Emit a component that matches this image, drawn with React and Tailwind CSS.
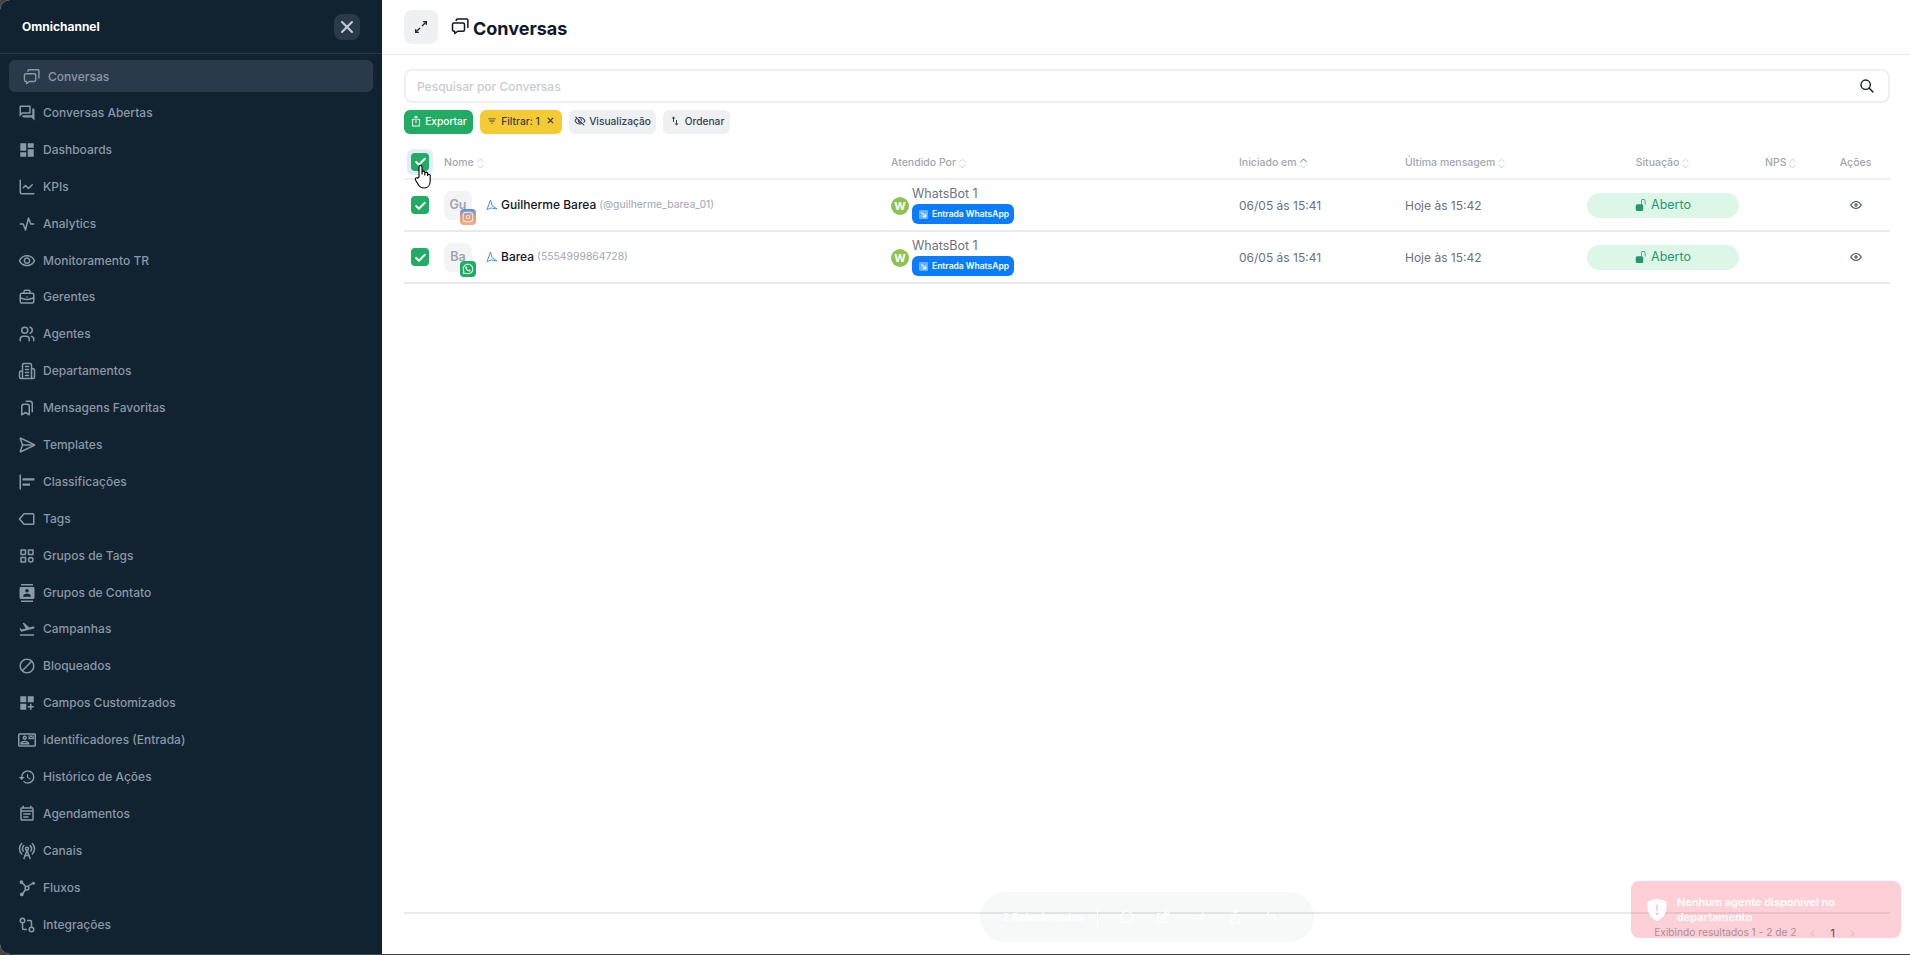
import {
  TbBriefcase, TbBookmarks, TbCategory, TbArrowsDiagonal, TbSearch, TbEye, TbX, TbBrandInstagram, TbUsers, TbMessageCircle, TbEdit, TbArrowsExchange, TbCornerUpLeft, TbChevronLeft, TbChevronRight, TbActivity,
} from "react-icons/tb";
import {
  MdDashboard, MdOutlineQuestionAnswer, MdOutlineVisibility, MdOutlineVisibilityOff, MdOutlineAlignHorizontalLeft, MdFlightTakeoff, MdOutlineBlock, MdDashboardCustomize, MdOutlineContactMail, MdHistory, MdContacts, MdOutlineEventNote, MdOutlineIosShare, MdFilterList, MdSwapVert,
} from "react-icons/md";
import { LuBuilding2, LuSendHorizontal, LuRadioTower, LuGitCompare, LuChartLine } from "react-icons/lu";
import { BsShieldFillExclamation, BsFillUnlockFill } from "react-icons/bs";
import { FaWhatsapp } from "react-icons/fa";

const TagIcon = ({ size }) => (
  <svg width={size} height={size} viewBox="0 0 24 24" fill="none" stroke="currentColor" strokeWidth="2">
    <path d="M8 5h12a1 1 0 0 1 1 1v12a1 1 0 0 1-1 1H8l-6-7z" strokeLinejoin="round" />
  </svg>
);

const ChatsIcon = ({ size, className }) => (
  <svg className={className} width={size} height={size} viewBox="0 0 24 24" fill="none" stroke="currentColor" strokeWidth="2" strokeLinejoin="round" strokeLinecap="round">
    <path d="M2 10a2 2 0 0 1 2-2h12a2 2 0 0 1 2 2v7a2 2 0 0 1-2 2H9l-4 3v-3H4a2 2 0 0 1-2-2z" />
    <path d="M7 4.500V4a1.500 1.500 0 0 1 1.500-1.500H21a1.500 1.500 0 0 1 1.500 1.500v10" />
  </svg>
);

const FlowIcon = ({ size }) => (
  <svg width={size} height={size} viewBox="0 0 24 24" fill="none" stroke="currentColor" strokeWidth="2">
    <path d="M5 4l5 6M19 6l-6 4M6 20l4-6" />
    <circle cx="12" cy="12" r="2.500" />
    <circle cx="4.500" cy="4" r="2.500" fill="currentColor" stroke="none" />
    <circle cx="20.500" cy="5.500" r="2" fill="currentColor" stroke="none" />
    <circle cx="5" cy="20.500" r="2.500" fill="currentColor" stroke="none" />
  </svg>
);

const menu = [
  { label: "Conversas Abertas", icon: MdOutlineQuestionAnswer },
  { label: "Dashboards", icon: MdDashboard },
  { label: "KPIs", icon: LuChartLine },
  { label: "Analytics", icon: TbActivity },
  { label: "Monitoramento TR", icon: MdOutlineVisibility },
  { label: "Gerentes", icon: TbBriefcase },
  { label: "Agentes", icon: TbUsers },
  { label: "Departamentos", icon: LuBuilding2 },
  { label: "Mensagens Favoritas", icon: TbBookmarks },
  { label: "Templates", icon: LuSendHorizontal },
  { label: "Classificações", icon: MdOutlineAlignHorizontalLeft },
  { label: "Tags", icon: TagIcon },
  { label: "Grupos de Tags", icon: TbCategory },
  { label: "Grupos de Contato", icon: MdContacts },
  { label: "Campanhas", icon: MdFlightTakeoff },
  { label: "Bloqueados", icon: MdOutlineBlock },
  { label: "Campos Customizados", icon: MdDashboardCustomize },
  { label: "Identificadores (Entrada)", icon: MdOutlineContactMail },
  { label: "Histórico de Ações", icon: MdHistory },
  { label: "Agendamentos", icon: MdOutlineEventNote },
  { label: "Canais", icon: LuRadioTower },
  { label: "Fluxos", icon: FlowIcon },
  { label: "Integrações", icon: LuGitCompare },
];

const rows = [
  { initials: "Gu", name: "Guilherme Barea", handle: "(@guilherme_barea_01)", channel: "instagram" },
  { initials: "Ba", name: "Barea", handle: "(5554999864728)", channel: "whatsapp" },
];

const gridCols = "grid grid-cols-[40px_447px_348px_166px_182px_152px_86px_1fr] items-center";

function Sidebar() {
  return (
    <aside className="w-[382px] shrink-0 bg-[#112231] rounded-l-[10px] overflow-hidden flex flex-col">
      <div className="h-[54px] shrink-0 border-b border-[#26384a] flex items-center justify-between pl-[22px] pr-[22px]">
        <span className="text-[12px] font-bold text-white">Omnichannel</span>
        <button className="w-[26px] h-[26px] rounded-lg bg-[#2b3a4a] flex items-center justify-center text-[#c3cad1]">
          <TbX size={20} strokeWidth={2.5} />
        </button>
      </div>
      <div className="px-[9px] pt-[6px]">
        <div className="h-[32px] rounded-md bg-[#2a3a4a] flex items-center pl-[14px] gap-[8px] text-[#8b98a6]">
          <ChatsIcon size={17} />
          <span className="pt-[1px] text-[12px] font-medium">Conversas</span>
        </div>
      </div>
      <nav className="pt-[2.5px]">
        {menu.map((item) => (
          <div key={item.label} className="h-[36.9px] flex items-center pl-[18px] gap-[7px] text-[#8b98a6]">
            <span className="w-[18px] flex justify-center"><item.icon size={18} /></span>
            <span className="text-[12px] font-medium">{item.label}</span>
          </div>
        ))}
      </nav>
    </aside>
  );
}

function SortHead({ label, active }) {
  return (
    <span className="pt-[3px] flex items-center gap-[2px] text-[10.5px] font-medium text-[#a3a7b0]">
      {label}
      <svg width="9" height="11" viewBox="0 0 9 11" fill="none" strokeWidth="1" strokeLinecap="round" strokeLinejoin="round">
        <path d="M1.500 4L4.500 1l3 3" stroke={active ? "#6b7280" : "#cfd2d8"} />
        <path d="M1.500 7l3 3 3-3" stroke="#cfd2d8" />
      </svg>
    </span>
  );
}

function Checkbox() {
  return (
    <span className="w-[18px] h-[18px] rounded-[4px] bg-[#22ab63] flex items-center justify-center">
      <svg width="13" height="13" viewBox="0 0 24 24" fill="none" stroke="white" strokeWidth="3.5" strokeLinecap="round" strokeLinejoin="round">
        <path d="M4 13l5 5L20 7" />
      </svg>
    </span>
  );
}

function Row({ row }) {
  return (
    <div className={`${gridCols} h-[52px] border-b-2 border-[#e8e9ec]`}>
      <div className="pl-[7px]"><Checkbox /></div>
      <div className="flex items-center">
        <div className="relative w-[28px] h-[29px] rounded-lg bg-[#f3f4f6] flex items-center justify-center text-[12.5px] font-semibold text-[#9ca3af]">
          {row.initials}
          {row.channel === "instagram" ? (
            <span className="absolute left-[16px] top-[18px] w-4 h-4 rounded-[4px] bg-gradient-to-b from-[#4d8fe0] via-[#e59a72] to-[#f0b090] flex items-center justify-center text-white/70">
              <TbBrandInstagram size={14} />
            </span>
          ) : (
            <span className="absolute left-[16px] top-[18px] w-4 h-4 rounded-[4px] bg-[#22ab63] flex items-center justify-center text-white">
              <FaWhatsapp size={12} />
            </span>
          )}
        </div>
        <svg className="ml-[14px] -mt-[1px]" width="12" height="12" viewBox="0 0 24 24" fill="none" stroke="#3f93f5" strokeWidth="2" strokeLinejoin="round">
          <path d="M9 2L2 21l9-3 11 2-10-7z" />
        </svg>
        <span className="ml-[3px] text-[12px] font-medium text-[#111827]">{row.name}</span>
        <span className="ml-[3px] text-[10.4px] text-[#a3a7b0]">{row.handle}</span>
      </div>
      <div className="flex items-center gap-[3px]">
        <span className="w-[18px] h-[18px] mt-[2px] rounded-full bg-[#8fc24f] flex items-center justify-center text-[11px] font-bold text-white">W</span>
        <div className="flex flex-col items-start">
          <span className="text-[12.5px] leading-[16px] text-[#6b7280]">WhatsBot 1</span>
          <span className="mt-[2px] h-[20px] w-[102px] rounded-md bg-[#0a7cff] flex items-center pl-[7px] gap-[4px] text-[8.5px] font-semibold text-white whitespace-nowrap">
            <span className="w-[9px] h-[9px] rounded-[1px] bg-white/40 flex items-center justify-center">
              <svg width="7" height="7" viewBox="0 0 10 10" stroke="white" strokeWidth="1.6" fill="none"><path d="M2 2l6 6M8 4v4H4" /></svg>
            </span>
            Entrada WhatsApp
          </span>
        </div>
      </div>
      <span className="pt-[1px] text-[12px] text-[#6b7280]">06/05 ás 15:41</span>
      <span className="pt-[1px] text-[12px] text-[#6b7280]">Hoje às 15:42</span>
      <span className="h-[25px] rounded-full bg-[#dcf6e7] flex items-center justify-center gap-[4px] text-[12.5px] text-[#27966f]">
        <BsFillUnlockFill size={12} className="-mt-[1px]" />
        Aberto
      </span>
      <span />
      <span className="flex justify-center pr-[4px] text-[#4b5563]"><TbEye size={14} /></span>
    </div>
  );
}

export default function App() {
  return (
    <div className="relative w-[1910px] h-[955px] bg-[#444] overflow-hidden font-[Inter,sans-serif]">
      <div className="h-[954px] flex bg-white rounded-l-[10px]">
        <Sidebar />
        <main className="flex-1 flex flex-col min-w-0">
          <header className="h-[55px] shrink-0 border-b border-[#e8e9ec] flex items-center pl-[22px]">
            <button className="w-[34px] h-[34px] rounded-lg bg-[#eff0f2] flex items-center justify-center text-[#1f2937]">
              <TbArrowsDiagonal size={16} />
            </button>
            <ChatsIcon size={18} className="ml-[13px] -mt-[2px] text-[#111827]" />
            <h1 className="ml-[4px] pt-[2px] text-[18px] font-bold text-[#0b1a2b]">Conversas</h1>
          </header>
          <div className="flex-1 flex flex-col pl-[22px] pr-[20px] pt-[14px]">
            <div className="h-[34px] rounded-lg border-2 border-[#eef0f2] flex items-center justify-between pl-[11px] pr-[13px]">
              <span className="pt-[1px] text-[12px] font-medium text-[#c8ccd2]">Pesquisar por Conversas</span>
              <TbSearch size={16} className="text-[#111827]" />
            </div>
            <div className="mt-[7px] flex gap-[7px] text-[10.2px] font-medium">
              <button className="h-[24px] w-[69px] rounded-md bg-[#22ab63] text-white flex items-center justify-center gap-[3px]">
                <MdOutlineIosShare size={12} className="-mt-[2px]" /> Exportar
              </button>
              <button className="h-[24px] w-[82px] rounded-md bg-[#f4cb35] text-[#374151] flex items-center justify-center gap-[4px]">
                <MdFilterList size={10} className="-mt-[2px]" /> Filtrar: 1 <TbX size={9} className="ml-[2px] -mt-[3px]" strokeWidth={3} />
              </button>
              <button className="h-[24px] w-[87px] rounded-md bg-[#eff0f2] text-[#374151] flex items-center justify-center gap-[3px]">
                <MdOutlineVisibilityOff size={12} className="-mt-[2px]" /> Visualização
              </button>
              <button className="h-[24px] w-[67px] rounded-md bg-[#eff0f2] text-[#374151] flex items-center justify-center gap-[4px]">
                <MdSwapVert size={12} className="-mt-[2px]" /> Ordenar
              </button>
            </div>
            <div className={`${gridCols} mt-[11px] h-[35px] border-b-2 border-[#eef0f2]`}>
              <div className="pl-[3px]">
                <span className="w-[26px] h-[26px] rounded-md bg-[#dfeefb] flex items-center justify-center"><Checkbox /></span>
              </div>
              <SortHead label="Nome" />
              <SortHead label="Atendido Por" />
              <SortHead label="Iniciado em" active />
              <SortHead label="Última mensagem" />
              <span className="flex justify-center"><SortHead label="Situação" /></span>
              <span className="pl-[26px]"><SortHead label="NPS" /></span>
              <span className="pt-[3px] text-center pr-[4px] text-[10.5px] font-medium text-[#a3a7b0]">Ações</span>
            </div>
            {rows.map((row) => <Row key={row.name} row={row} />)}
            <div className="mt-auto mb-[2px] h-[40px] border-t-2 border-[#e8e9ec] flex items-center justify-end pr-[32px] text-[10.2px] text-[#9ca3af]">
              <span>Exibindo resultados 1 - 2 de 2</span>
              <TbChevronLeft size={11} className="ml-[10px] text-[#d1d5db]" />
              <span className="ml-[13px] text-[11px] text-[#374151]">1</span>
              <TbChevronRight size={11} className="ml-[12px] text-[#d1d5db]" />
            </div>
          </div>
        </main>
      </div>

      {/* barra de selecao ainda aparecendo */}
      <div className="absolute left-[980px] top-[892px] w-[334px] h-[50px] rounded-full bg-[#6b8e86]/[0.05] flex items-center pl-[22px] text-white/80">
        <span className="w-[81px] text-[11px] font-bold whitespace-nowrap">2 Selecionados</span>
        <span className="w-px h-[20px] bg-white ml-[14px]" />
        <div className="ml-[21px] flex gap-[20px]">
          <TbMessageCircle size={16} />
          <TbEdit size={16} />
          <TbArrowsExchange size={16} />
          <MdOutlineIosShare size={16} />
          <TbCornerUpLeft size={16} />
        </div>
      </div>

      {/* toast */}
      <div className="absolute left-[1631px] top-[881px] w-[270px] h-[57px] rounded-lg bg-[#f5425a]/25 flex items-start pl-[15px] pt-[14px] text-white">
        <BsShieldFillExclamation size={22} className="mt-[4px]" />
        <p className="ml-[9px] w-[210px] text-[11px] leading-[15px] font-semibold">Nenhum agente disponível no departamento</p>
      </div>

      {/* cursor */}
      <svg className="absolute left-[414px] top-[164px]" width="20" height="25" viewBox="0 0 20 25" fill="white" stroke="black" strokeWidth="1.1" strokeLinejoin="round">
        <path d="M5 13V3a1.500 1.500 0 0 1 3 0v7l0-1.500a1.400 1.400 0 0 1 2.800 0V11V9.500a1.400 1.400 0 0 1 2.800 0V11.500a1.300 1.300 0 0 1 2.600 0V17c0 4-2.400 7-6 7-3 0-4.500-1-6-3.500L1.500 16c-1-1.500.8-3 2-1.800z" />
      </svg>
    </div>
  );
}
